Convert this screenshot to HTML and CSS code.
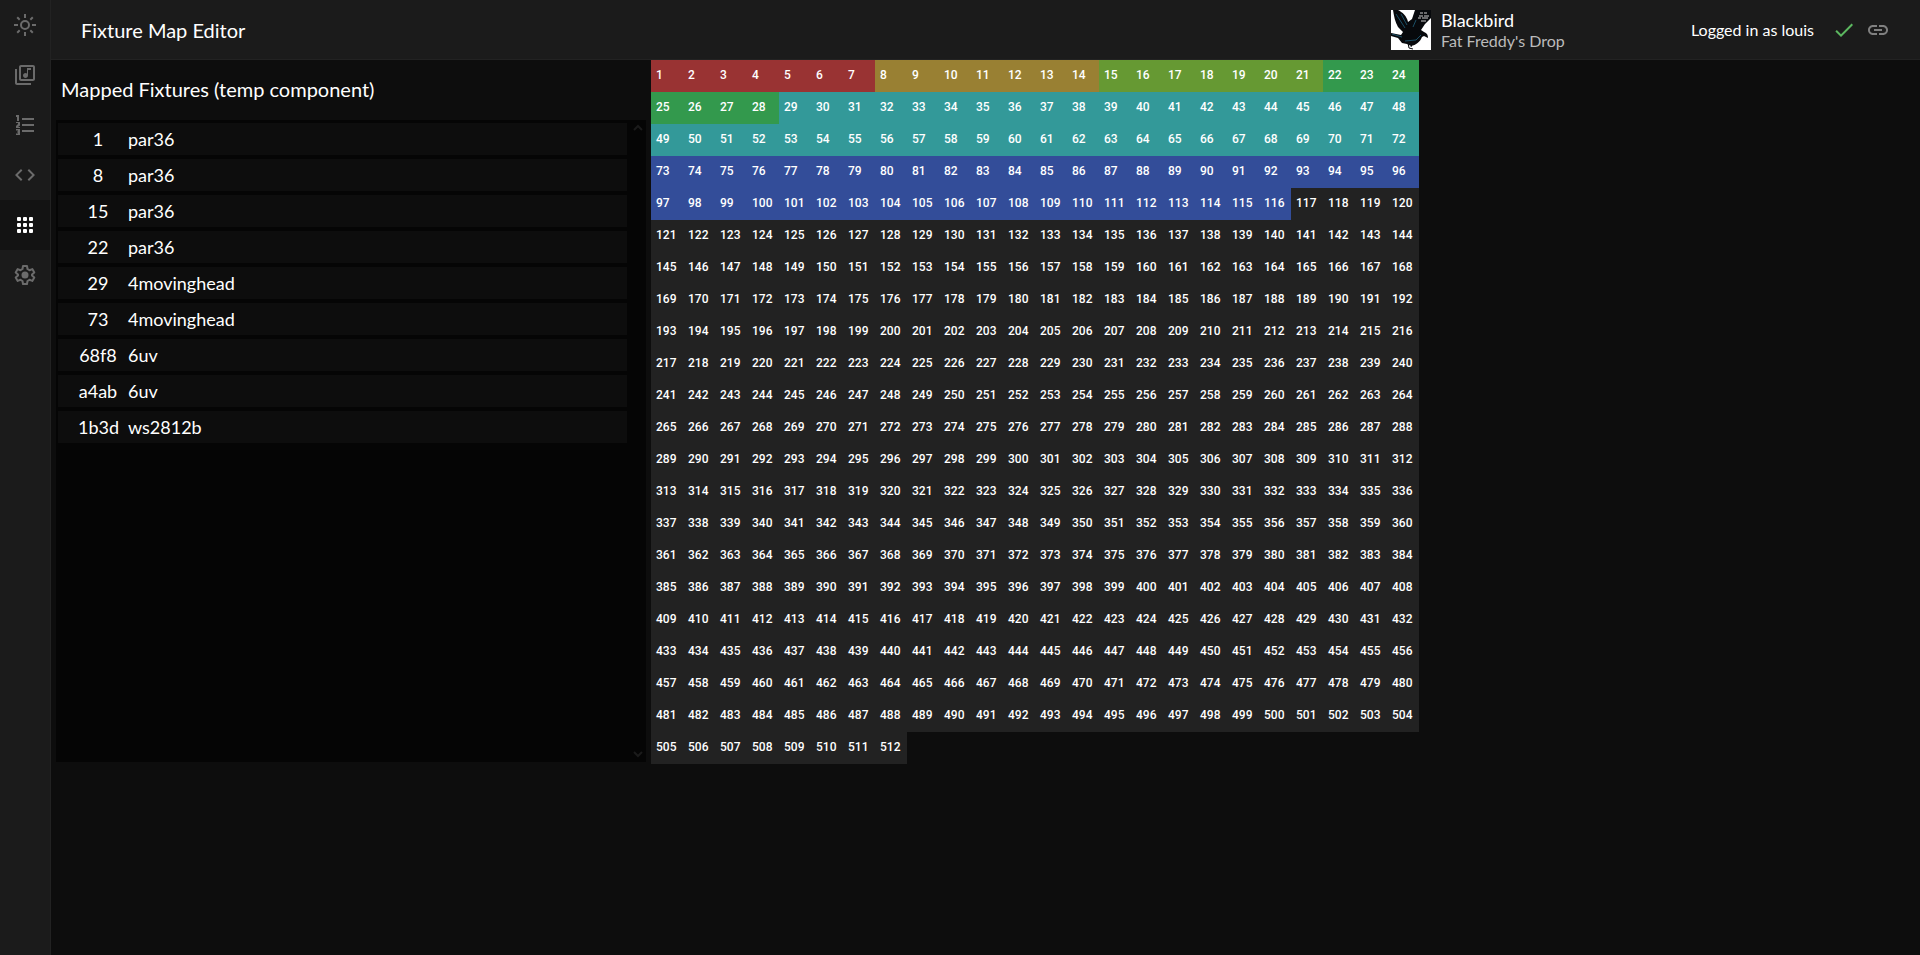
FILE: index.html
```
<!DOCTYPE html>
<html lang="en">
<head>
  <meta charset="UTF-8" />
  <meta name="viewport" content="width=device-width, initial-scale=1.0" />
  <title>Fixture Map Editor</title>
  <link rel="stylesheet" href="styles.css">
</head>
<body>
  <nav class="sidebar">
    <a href="#live" aria-label="Live">
      <svg viewBox="0 0 24 24"><path d="M12 7a5 5 0 1 0 0 10 5 5 0 0 0 0-10zm0 2a3 3 0 1 1 0 6 3 3 0 0 1 0-6zM11 1h2v4h-2zM11 19h2v4h-2zM1 11h4v2H1zM19 11h4v2h-4zM4.9 3.5l2.5 2.5L6 7.4 3.5 4.9zM19.1 3.5l1.4 1.4L18 7.4 16.6 6zM6 16.6L7.4 18l-2.5 2.5-1.4-1.4zM18 16.6l2.5 2.5-1.4 1.4-2.5-2.5z"/></svg>
    </a>
    <a href="#tracks" aria-label="Tracks">
      <svg viewBox="0 0 24 24"><path d="M20 2H8c-1.1 0-2 .9-2 2v12c0 1.1.9 2 2 2h12c1.1 0 2-.9 2-2V4c0-1.1-.9-2-2-2zm0 14H8V4h12v12zm-7.500-1c1.380 0 2.500-1.120 2.500-2.500V7h3V5h-4v5.510c-.42-.32-.93-.51-1.500-.51-1.380 0-2.500 1.120-2.500 2.500s1.120 2.500 2.500 2.500zM4 6H2v14c0 1.1.9 2 2 2h14v-2H4V6z"/></svg>
    </a>
    <a href="#cues" aria-label="Cues">
      <svg viewBox="0 0 24 24"><path d="M9 5h12v2H9zM9 11h12v2H9zM9 17h12v2H9zM3 2h3v6H4V4H3zM3 9h4v3.5L5 14h2v1H3v-2l2-2v-1H3zM3 16h4v6H3v-1.5h2v-1H4v-1h1v-1H3z"/></svg>
    </a>
    <a href="#scripts" aria-label="Scripts">
      <svg viewBox="0 0 24 24"><path d="M9.4 16.6L4.8 12l4.6-4.6L8 6l-6 6 6 6 1.4-1.4zm5.2 0l4.6-4.6-4.6-4.6L16 6l6 6-6 6-1.4-1.4z"/></svg>
    </a>
    <a class="active" href="#map" aria-label="Fixture map">
      <svg viewBox="0 0 24 24"><path d="M4 5a1 1 0 0 1 1-1h2a1 1 0 0 1 1 1v2a1 1 0 0 1-1 1H5a1 1 0 0 1-1-1zM10 5a1 1 0 0 1 1-1h2a1 1 0 0 1 1 1v2a1 1 0 0 1-1 1h-2a1 1 0 0 1-1-1zM16 5a1 1 0 0 1 1-1h2a1 1 0 0 1 1 1v2a1 1 0 0 1-1 1h-2a1 1 0 0 1-1-1zM4 11a1 1 0 0 1 1-1h2a1 1 0 0 1 1 1v2a1 1 0 0 1-1 1H5a1 1 0 0 1-1-1zM10 11a1 1 0 0 1 1-1h2a1 1 0 0 1 1 1v2a1 1 0 0 1-1 1h-2a1 1 0 0 1-1-1zM16 11a1 1 0 0 1 1-1h2a1 1 0 0 1 1 1v2a1 1 0 0 1-1 1h-2a1 1 0 0 1-1-1zM4 17a1 1 0 0 1 1-1h2a1 1 0 0 1 1 1v2a1 1 0 0 1-1 1H5a1 1 0 0 1-1-1zM10 17a1 1 0 0 1 1-1h2a1 1 0 0 1 1 1v2a1 1 0 0 1-1 1h-2a1 1 0 0 1-1-1zM16 17a1 1 0 0 1 1-1h2a1 1 0 0 1 1 1v2a1 1 0 0 1-1 1h-2a1 1 0 0 1-1-1z"/></svg>
    </a>
    <a href="#settings" aria-label="Settings">
      <svg viewBox="0 0 24 24"><path fill="none" stroke="currentColor" stroke-width="2" stroke-linejoin="round" d="M10 3h4l.5 3 2 1.2 2.8-1.1 2 3.4-2.3 1.9v1.2l2.3 1.9-2 3.4-2.8-1.1-2 1.2-.5 3h-4l-.5-3-2-1.2-2.8 1.1-2-3.4L5 12.6v-1.2L2.7 9.500l2-3.400 2.800 1.100 2-1.200z"/><circle cx="12" cy="12" r="3.5"/></svg>
    </a>
  </nav>

  <div class="page">
    <header class="header">
      <h1>Fixture Map Editor</h1>
      <div class="track">
        <svg class="cover" viewBox="0 0 40 40" role="img" aria-label="Album cover">
          <path fill="#fff" d="M0 0h40v40H0z"/>
          <path fill="#07090c" d="M2 0c1 6 2 12 5 17l5 5-2 3-10-2v3l7 2 4 5 5 1 4 2c5-1 9-4 11-9l2-1 4 2c0-3-1-5-4-6l-3-2 4-6 6-6V0H24l-3 9-4 3C16 6 11 2 7 0z"/>
          <path fill="none" stroke="#07090c" d="M17 33l1 5 4 1M21 34l-1 3"/>
          <path fill="none" stroke="#1b4f66" d="M5 4l9 14M10 4l6 11M1 24l10 3M14 31l11-1 5-5M22 17l3-7"/>
          <path fill="none" stroke="#ccc" d="M29 3h3m1 0h3M28 6h4m1 0h5M27 8h3m1 0h6M30 11h5"/>
        </svg>
        <div>
          <div class="track-name">Blackbird</div>
          <div class="track-artist">Fat Freddy's Drop</div>
        </div>
      </div>
      <div class="status">
        <span>Logged in as louis</span>
        <svg class="check" viewBox="0 0 24 24"><path d="M9 16.2L4.8 12l-1.4 1.4L9 19 21 7l-1.4-1.4z"/></svg>
        <svg class="link" viewBox="0 0 24 24"><path d="M3.9 12c0-1.710 1.390-3.100 3.100-3.100h4V7H7c-2.760 0-5 2.240-5 5s2.240 5 5 5h4v-1.900H7c-1.710 0-3.100-1.390-3.100-3.100zM8 13h8v-2H8v2zm9-6h-4v1.900h4c1.710 0 3.100 1.390 3.100 3.100s-1.390 3.100-3.100 3.100h-4V17h4c2.760 0 5-2.240 5-5s-2.240-5-5-5z"/></svg>
      </div>
    </header>

    <main class="editor">
      <section class="mapped">
        <h2>Mapped Fixtures (temp component)</h2>
        <div class="fixture-box">
          <ul class="fixtures">
            <li><span class="channel">1</span>par36</li>
            <li><span class="channel">8</span>par36</li>
            <li><span class="channel">15</span>par36</li>
            <li><span class="channel">22</span>par36</li>
            <li><span class="channel">29</span>4movinghead</li>
            <li><span class="channel">73</span>4movinghead</li>
            <li><span class="channel">68f8</span>6uv</li>
            <li><span class="channel">a4ab</span>6uv</li>
            <li><span class="channel">1b3d</span>ws2812b</li>
          </ul>
          <div class="rail">
            <svg viewBox="0 0 17 17"><path d="M5 10l4-4 4 4"/></svg>
            <svg viewBox="0 0 17 17"><path d="M5 7l4 4 4-4"/></svg>
          </div>
        </div>
      </section>
      <div class="channels" id="channels"></div>
    </main>
  </div>

  <script>
const fixtures = [
  { from: 1, to: 7, color: "red" },
  { from: 8, to: 14, color: "gold" },
  { from: 15, to: 21, color: "lime" },
  { from: 22, to: 28, color: "green" },
  { from: 29, to: 72, color: "teal" },
  { from: 73, to: 116, color: "blue" }
];

const channels = document.querySelector("#channels");

for (let i = 1; i <= 512; i++) {
  const cell = document.createElement("div");
  const fixture = fixtures.find(f => i >= f.from && i <= f.to);
  cell.className = fixture ? "cell " + fixture.color : "cell";
  cell.textContent = i;
  channels.appendChild(cell);
}
  </script>
</body>
</html>
```
FILE: styles.css
```
* {
  margin: 0;
  padding: 0;
  box-sizing: border-box;
}

body {
  display: flex;
  min-height: 100vh;
  font-family: Lato, sans-serif;
  font-size: 18px;
  color: #fff;
  background: #0d0d0d;
}

svg {
  display: block;
  fill: currentColor;
}

.sidebar {
  flex: none;
  width: 51px;
  background: #1b1b1b;
  border-right: 1px solid #222;
}

.sidebar a {
  display: flex;
  align-items: center;
  justify-content: center;
  height: 50px;
  color: #6b6b6b;
}

.sidebar a.active {
  color: #fff;
  background: #131313;
}

.sidebar svg {
  width: 24px;
  height: 24px;
}

.page {
  flex: 1;
  min-width: 0;
}

.header {
  display: flex;
  align-items: center;
  height: 60px;
  padding: 0 30px;
  background: #1b1b1b;
  border-bottom: 1px solid #222;
}

.header h1 {
  flex: 1;
  font-size: 20px;
  font-weight: 400;
}

.track {
  display: flex;
  align-items: center;
  gap: 10px;
  width: 300px;
  padding-top: 1px;
}

.cover {
  width: 40px;
  height: 40px;
}

.track-name {
  font-size: 18px;
  line-height: 21px;
}

.track-artist {
  font-size: 16px;
  line-height: 20px;
  color: #bbb;
}

.status {
  display: flex;
  align-items: center;
  font-size: 16px;
}

.status svg {
  width: 24px;
  height: 24px;
}

.check {
  margin-left: 18px;
  color: #5cb860;
}

.link {
  margin-left: 10px;
  color: #808080;
}

.editor {
  display: flex;
}

.mapped {
  flex: none;
  width: 600px;
}

.mapped h2 {
  padding: 0 10px 2px;
  font-size: 20px;
  font-weight: 400;
  line-height: 58px;
}

.fixture-box {
  display: flex;
  height: 642px;
  margin: 0 5px;
  background: #050505;
}

.fixtures {
  flex: 1;
  padding: 3px 2px;
  list-style: none;
}

.fixtures li {
  display: flex;
  gap: 10px;
  margin-bottom: 4px;
  padding-left: 20px;
  line-height: 32px;
  background: #0d0d0d;
}

.channel {
  width: 40px;
  text-align: center;
}

.rail {
  display: flex;
  flex-direction: column;
  justify-content: space-between;
  width: 17px;
}

.rail svg {
  width: 17px;
  height: 17px;
  fill: none;
  stroke: #1b1b1b;
  stroke-width: 2;
}

.channels {
  display: grid;
  grid-template-columns: repeat(24, 32px);
  align-content: start;
}

.cell {
  height: 32px;
  padding-left: 5px;
  font: 500 12px/30px Roboto, Arial, sans-serif;
  background: #222;
}

.red {
  background: #993333;
}

.gold {
  background: #998033;
}

.lime {
  background: #669933;
}

.green {
  background: #33994d;
}

.teal {
  background: #339999;
}

.blue {
  background: #334d99;
}
```
